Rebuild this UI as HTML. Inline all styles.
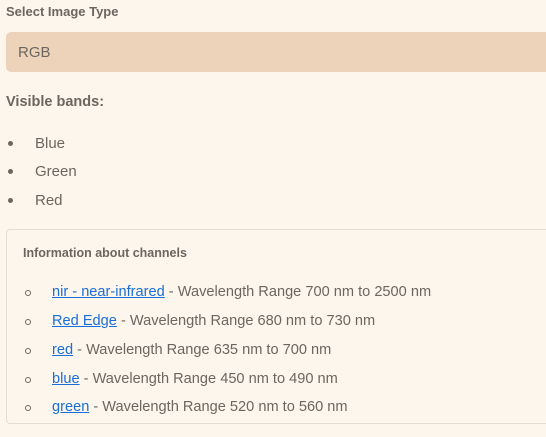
<!DOCTYPE html>
<html><head><style>
html,body{margin:0;padding:0;width:546px;height:437px;overflow:hidden;background:#fdf6ec;font-family:"Liberation Sans",sans-serif;color:#6d6660;}
.abs{position:absolute;white-space:nowrap;}
.sel{position:absolute;left:6px;top:32px;width:560px;height:40px;background:#edd3b9;border-radius:5px;}
.box{position:absolute;left:6px;top:229px;width:560px;height:193px;border:1px solid #e6ddd0;border-radius:4px;}
a{color:#1a6ed8;text-decoration:underline;}
.dot{position:absolute;width:5px;height:5px;border-radius:50%;background:#6d6660;}
.circ{position:absolute;width:4px;height:4px;border-radius:50%;border:1px solid #6d6660;}
.t{font-size:14.6px;}
</style></head><body>
<div class="abs" style="left:6px;top:4px;font-size:13px;font-weight:bold;">Select Image Type</div>
<div class="sel"></div>
<div class="abs" style="left:18px;top:44px;font-size:15px;">RGB</div>
<div class="abs" style="left:6px;top:94px;font-size:14.5px;font-weight:bold;">Visible bands:</div>
<div class="dot" style="left:8px;top:141px"></div><div class="abs" style="left:35px;top:135px;font-size:15px;">Blue</div>
<div class="dot" style="left:8px;top:169px"></div><div class="abs" style="left:35px;top:163px;font-size:15px;">Green</div>
<div class="dot" style="left:8px;top:198px"></div><div class="abs" style="left:35px;top:192px;font-size:15px;">Red</div>
<div class="box"></div>
<div class="abs" style="left:23px;top:246px;font-size:12.5px;font-weight:bold;">Information about channels</div>
<div class="circ" style="left:25px;top:290px"></div><div class="abs t" style="left:52px;top:284px;"><a>nir - near-infrared</a> - Wavelength Range 700 nm to 2500 nm</div>
<div class="circ" style="left:25px;top:319px"></div><div class="abs t" style="left:52px;top:313px;"><a>Red Edge</a> - Wavelength Range 680 nm to 730 nm</div>
<div class="circ" style="left:25px;top:348px"></div><div class="abs t" style="left:52px;top:342px;"><a>red</a> - Wavelength Range 635 nm to 700 nm</div>
<div class="circ" style="left:25px;top:377px"></div><div class="abs t" style="left:52px;top:371px;"><a>blue</a> - Wavelength Range 450 nm to 490 nm</div>
<div class="circ" style="left:25px;top:405px"></div><div class="abs t" style="left:52px;top:399px;"><a>green</a> - Wavelength Range 520 nm to 560 nm</div>
</body></html>
